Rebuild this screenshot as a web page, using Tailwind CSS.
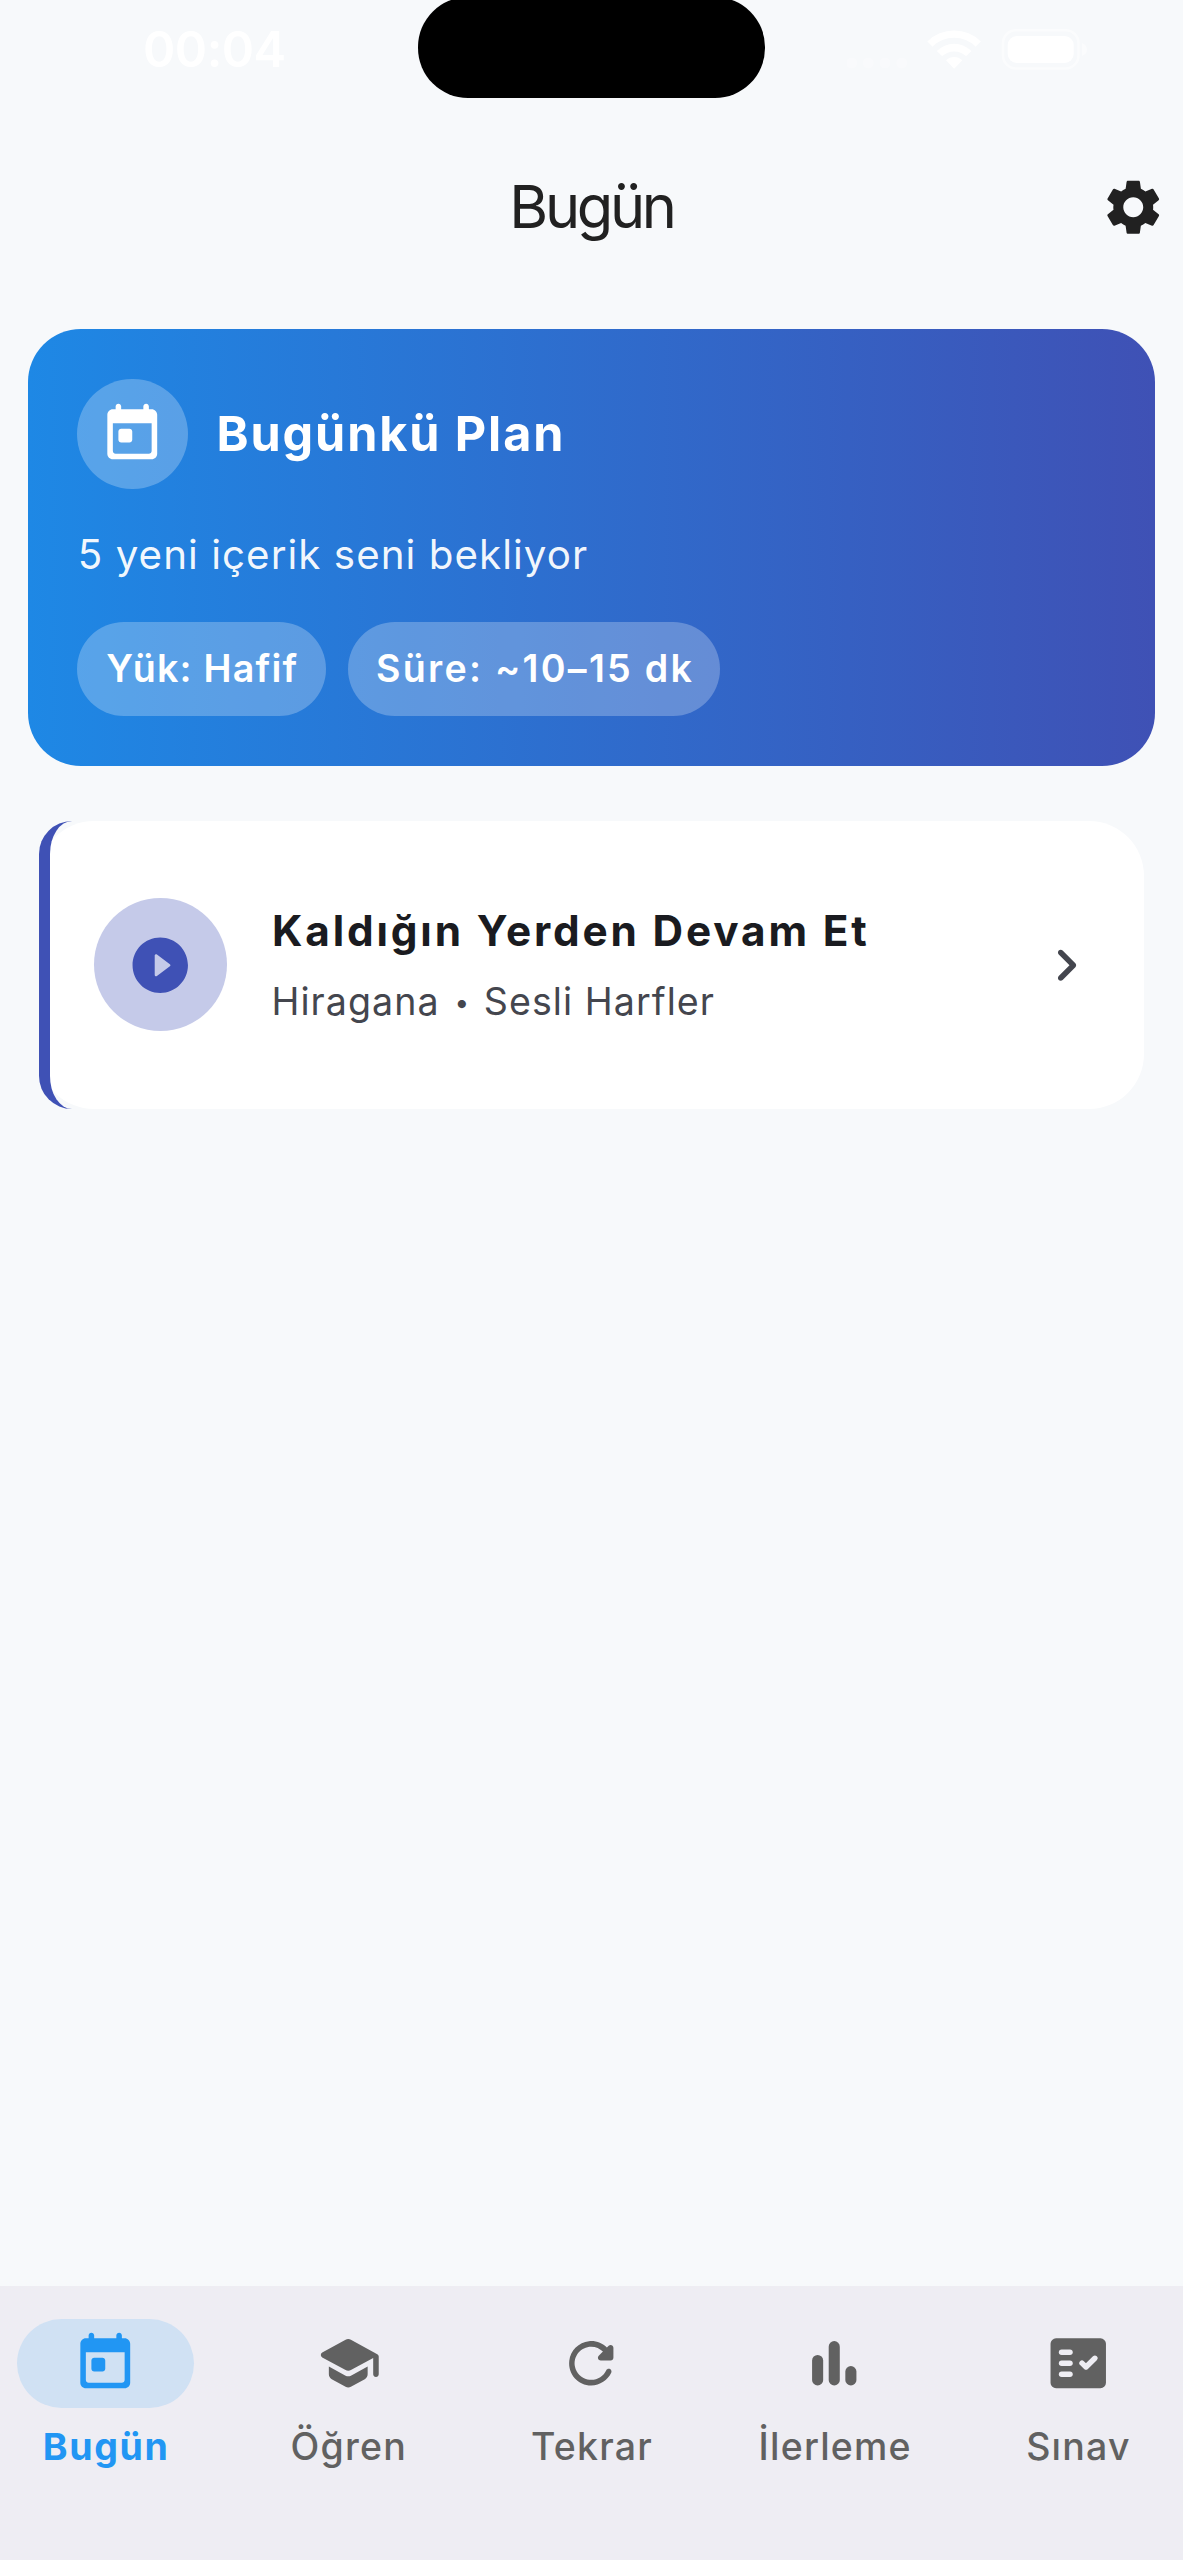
<!DOCTYPE html>
<html lang="tr">
<head>
<meta charset="utf-8">
<title>Bugün</title>
<script src="https://cdn.jsdelivr.net/npm/@tailwindcss/browser@4"></script>
</head>
<body class="bg-[#f7f9fb] font-['Inter',sans-serif]">
<svg class="hidden">
  <symbol id="today" viewBox="0 0 24 24"><path d="M19 3h-1V2c0-.55-.45-1-1-1s-1 .45-1 1v1H8V2c0-.55-.45-1-1-1s-1 .45-1 1v1H5c-1.11 0-1.99.9-1.99 2L3 19c0 1.1.89 2 2 2h14c1.1 0 2-.9 2-2V5c0-1.1-.9-2-2-2zm-1 16H6c-.55 0-1-.45-1-1V8h14v10c0 .55-.45 1-1 1zM8 10h3c.55 0 1 .45 1 1v3c0 .55-.45 1-1 1H8c-.55 0-1-.45-1-1v-3c0-.55.45-1 1-1z"/></symbol>
</svg>
<div class="relative flex h-[2560px] w-[1183px] flex-col overflow-hidden">
  <!-- Status bar -->
  <div class="relative flex h-[98px] shrink-0 items-center justify-between pr-[96px] pl-[143px] text-white">
    <span class="text-[49px] leading-none font-semibold tracking-[-0.5px]">00:04</span>
    <div class="absolute -top-[3px] left-[418px] h-[101px] w-[347px] rounded-[50px] bg-black"></div>
    <svg class="h-[44px] w-[240px]" viewBox="847 25 240 44" fill="#fff">
      <g opacity=".3"><circle cx="851.7" cy="61" r="5.5"/><circle cx="868.3" cy="61" r="5.5"/><circle cx="885" cy="61" r="5.5"/><circle cx="901.7" cy="61" r="5.5"/></g>
      <path d="M927.3 39.5a38 38 0 0 1 53.600 0l-5.200 5.200a30.500 30.500 0 0 0-43.200 0z"/>
      <path d="M936.800 49a24.500 24.500 0 0 1 34.700 0l-5.400 5.300a17 17 0 0 0-23.900 0z"/>
      <path d="M946 58.300a11.500 11.500 0 0 1 16.300 0l-8.150 8.400z"/>
      <rect x="1003" y="28.200" width="75.500" height="38.300" rx="13" fill="none" stroke="#fff" stroke-width="2.600" opacity=".5"/>
      <rect x="1007.700" y="34" width="66" height="27" rx="9"/>
      <path d="M1082 41q5 2 5 6.500t-5 6.500z" opacity=".5"/>
    </svg>
  </div>

  <!-- App bar -->
  <header class="relative flex h-[218px] shrink-0 items-center justify-center">
    <h1 class="text-[59.500px] leading-none font-normal tracking-[-3.300px] text-[#212121]">Bugün</h1>
    <svg class="absolute right-[16.500px] size-[66.500px] fill-[#212121]" viewBox="0 0 24 24"><path d="M19.140 12.940c.04-.3.06-.61.06-.94 0-.32-.02-.64-.07-.94l2.030-1.580c.18-.14.23-.41.12-.61l-1.920-3.320c-.12-.22-.37-.29-.59-.22l-2.390.96c-.5-.38-1.030-.7-1.620-.94l-.36-2.540c-.04-.24-.24-.41-.48-.41h-3.840c-.24 0-.43.17-.47.41l-.36 2.540c-.59.24-1.130.57-1.620.94l-2.390-.96c-.22-.08-.47 0-.59.22L2.740 8.870c-.12.21-.08.47.12.61l2.030 1.580c-.05.3-.09.63-.09.94s.02.64.07.94l-2.030 1.580c-.18.14-.23.41-.12.61l1.920 3.320c.12.22.37.29.59.22l2.390-.96c.5.38 1.030.7 1.620.94l.36 2.540c.05.24.24.41.48.41h3.840c.24 0 .44-.17.47-.41l.36-2.540c.59-.24 1.130-.56 1.620-.94l2.390.96c.22.08.47 0 .59-.22l1.920-3.320c.12-.22.07-.47-.12-.61l-2.010-1.580zM12 15.600c-1.980 0-3.600-1.620-3.600-3.600s1.620-3.600 3.600-3.600 3.600 1.620 3.600 3.600-1.620 3.600-3.600 3.600z"/></svg>
  </header>

  <!-- Daily plan -->
  <section class="mx-[27.700px] mt-[13px] h-[436.500px] shrink-0 rounded-[53px] bg-linear-to-r/srgb from-[#1e88e5] to-[#3f51b5] px-[49.600px] pt-[49.600px] text-white">
    <div class="flex items-center">
      <div class="flex size-[110.700px] items-center justify-center rounded-full bg-white/25">
        <svg class="size-[66.500px] fill-white"><use href="#today"/></svg>
      </div>
      <h2 class="ml-[28.500px] text-[48.500px] leading-none font-bold tracking-[1.900px]">Bugünkü Plan</h2>
    </div>
    <p class="mt-[36px] ml-[0.500px] text-[40.300px] leading-[60px] tracking-[1.050px] text-white/95">5 yeni içerik seni bekliyor</p>
    <div class="mt-[36.500px] flex gap-[22px] text-[37.600px] font-[570] whitespace-nowrap">
      <span class="flex h-[94px] w-[248.700px] items-center rounded-full bg-white/25 pl-[29px] tracking-[1.200px]">Yük: Hafif</span>
      <span class="flex h-[94px] w-[372px] items-center rounded-full bg-white/25 pl-[28px] tracking-[2.300px]">Süre: ~10–15 dk</span>
    </div>
  </section>

  <!-- Continue card -->
  <section class="relative mx-[38.700px] mt-[55.500px] flex h-[287.500px] shrink-0 items-center rounded-[55px] bg-white pr-[44.500px] pl-[55.300px]">
    <div class="absolute inset-0 rounded-[33px] border-l-[11px] border-[#3f51b5]"></div>
    <div class="flex size-[133px] items-center justify-center rounded-full bg-[#c5cae9]">
      <svg class="size-[66.500px] fill-[#3f51b5]" viewBox="0 0 24 24"><path d="M12 2C6.480 2 2 6.480 2 12s4.480 10 10 10 10-4.480 10-10S17.520 2 12 2zm-2 13.500v-7c0-.41.47-.65.8-.4l4.670 3.500c.27.2.27.6 0 .8l-4.670 3.500c-.33.25-.8.01-.8-.4z"/></svg>
    </div>
    <div class="ml-[44.500px] flex flex-1 flex-col gap-[14.600px] whitespace-nowrap">
      <h3 class="ml-[0.500px] text-[42.300px] leading-[60px] font-bold tracking-[2.850px] text-[#1a1b20]">Kaldığın Yerden Devam Et</h3>
      <p class="text-[37.600px] leading-[52.800px] tracking-[1.050px] text-[#44464e]">Hiragana <span class="inline-block w-[21px] text-center text-[26px] leading-none tracking-normal align-[3px]">•</span> Sesli Harfler</p>
    </div>
    <svg class="size-[66.500px] fill-[#44464e]" viewBox="0 0 24 24"><path d="M9.290 6.710c-.39.39-.39 1.020 0 1.410L13.170 12l-3.880 3.880c-.39.39-.39 1.020 0 1.410.39.39 1.020.39 1.410 0l4.590-4.590c.39-.39.39-1.020 0-1.410L10.700 6.700c-.38-.38-1.020-.38-1.410.01z"/></svg>
  </section>

  <!-- Bottom navigation -->
  <nav class="mt-auto flex h-[273.700px] shrink-0 justify-between bg-[#eeedf3] px-[16.600px] pt-[33px] text-[37.500px] leading-[50px] font-[450] tracking-[1.200px] text-[#616161]">
    <a class="flex w-[177px] flex-col items-center gap-[14.500px] font-[670] tracking-[1.600px] text-[#2196f3]">
      <span class="flex h-[88.500px] w-[177px] items-center justify-center rounded-full bg-[#d0e1f3]"><svg class="size-[66.500px] fill-current"><use href="#today"/></svg></span>
      <span class="pl-[2px]">Bugün</span>
    </a>
    <a class="flex w-[177px] flex-col items-center gap-[14.500px]">
      <span class="flex h-[88.500px] items-center"><svg class="size-[66.500px] fill-current" viewBox="0 0 24 24"><path d="M5 13.180v2.810c0 .73.4 1.410 1.040 1.760l5 2.730c.6.33 1.320.33 1.920 0l5-2.730c.64-.35 1.040-1.030 1.040-1.760v-2.810l-6.040 3.300c-.6.33-1.320.33-1.920 0L5 13.180zm6.040-9.660l-8.430 4.600c-.69.38-.69 1.380 0 1.760l8.430 4.600c.6.33 1.320.33 1.920 0L21 10.090V16c0 .55.45 1 1 1s1-.45 1-1V9.590c0-.37-.2-.7-.52-.88l-9.520-5.190c-.6-.32-1.320-.32-1.920 0z"/></svg></span>
      <span class="pl-[1px]">Öğren</span>
    </a>
    <a class="flex w-[177px] flex-col items-center gap-[14.500px]">
      <span class="flex h-[88.500px] items-center"><svg class="size-[66.500px] fill-current" viewBox="0 0 24 24"><path d="M17.650 6.350c-1.630-1.630-3.940-2.570-6.480-2.310-3.670.37-6.690 3.350-7.100 7.020C3.520 15.910 7.270 20 12 20c3.190 0 5.930-1.870 7.210-4.560.32-.67-.16-1.440-.9-1.440-.37 0-.72.2-.88.53-1.130 2.430-3.840 3.970-6.800 3.310-2.220-.49-4.010-2.300-4.480-4.520C5.310 9.440 8.260 6 12 6c1.660 0 3.140.69 4.220 1.780l-1.510 1.510c-.63.63-.19 1.710.7 1.710H19c.55 0 1-.45 1-1V6.410c0-.89-1.080-1.340-1.710-.71l-.64.65z"/></svg></span>
      <span class="pl-[1px]">Tekrar</span>
    </a>
    <a class="flex w-[177px] flex-col items-center gap-[14.500px]">
      <span class="flex h-[88.500px] items-center"><svg class="size-[66.500px] fill-current" viewBox="0 0 24 24"><rect x="4" y="9" width="4" height="11" rx="2"/><rect x="10" y="4" width="4" height="16" rx="2"/><rect x="16" y="13" width="4" height="7" rx="2"/></svg></span>
      <span class="pl-[1px]">İlerleme</span>
    </a>
    <a class="flex w-[177px] flex-col items-center gap-[14.500px]">
      <span class="flex h-[88.500px] items-center"><svg class="size-[66.500px]" viewBox="0 0 24 24"><rect x="2" y="3" width="20" height="18" rx="2" class="fill-current"/><g fill="#eeedf3"><rect x="5" y="7" width="5" height="2" rx="1"/><rect x="5" y="11" width="5" height="2" rx="1"/><rect x="5" y="15" width="5" height="2" rx="1"/></g><path d="M13.350 11.950l1.450 1.400 3.200-3.150" fill="none" stroke="#eeedf3" stroke-width="1.950" stroke-linecap="round" stroke-linejoin="round"/></svg></span>
      <span class="pl-[1px]">Sınav</span>
    </a>
  </nav>
</div>
</body>
</html>
